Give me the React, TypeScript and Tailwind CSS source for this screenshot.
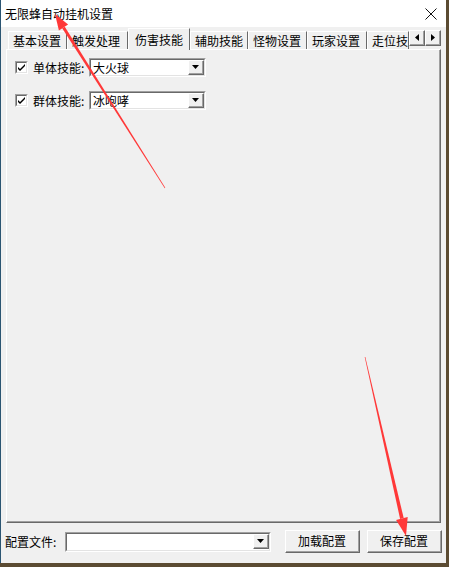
import React from "react";

const font = { fontFamily: '"Noto Sans CJK SC", "Liberation Sans", sans-serif' };

const tabs = [
  { label: "基本设置", w: "w-[59px]" },
  { label: "触发处理", w: "w-[61px]" },
  { label: "伤害技能", w: "w-[62px]", active: true },
  { label: "辅助技能", w: "w-[58px]" },
  { label: "怪物设置", w: "w-[59px]" },
  { label: "玩家设置", w: "w-[60px]" },
  { label: "走位技能", w: "w-[42px]" },
];

function Raised({ className = "", children }: { className?: string; children?: React.ReactNode }) {
  return (
    <div className={`border border-t-white border-l-white border-r-[#696969] border-b-[#696969] ${className}`}>
      <div className="flex h-full w-full items-center justify-center border-r border-b border-[#a0a0a0]">
        {children}
      </div>
    </div>
  );
}

function Sunken({ className = "", children }: { className?: string; children?: React.ReactNode }) {
  return (
    <div className={`border border-t-[#a0a0a0] border-l-[#a0a0a0] border-r-white border-b-white ${className}`}>
      <div className="flex h-full w-full border-t border-l border-t-[#696969] border-l-[#696969] border-r border-b border-r-[#e3e3e3] border-b-[#e3e3e3] bg-white">
        {children}
      </div>
    </div>
  );
}

function Combo({ value, className }: { value: string; className: string }) {
  return (
    <Sunken className={className}>
      <div className="flex-1 pl-[2px] text-[12px] leading-[15px] text-black">{value}</div>
      <Raised className="h-[15px] w-[16px] bg-[#f0f0f0]">
        <svg width="7" height="4" viewBox="0 0 7 4">
          <path d="M0 0h7L3.5 4z" fill="#000" />
        </svg>
      </Raised>
    </Sunken>
  );
}

function Check() {
  return (
    <Sunken className="h-[13px] w-[13px]">
      <svg width="9" height="9" viewBox="0 0 9 9" className="m-auto">
        <path d="M1 4l2 2 5-5v2l-5 5-2-2z" fill="#000" />
      </svg>
    </Sunken>
  );
}

function Row({ label, value }: { label: string; value: string }) {
  return (
    <div className="flex items-center">
      <div className="ml-[8px]">
        <Check />
      </div>
      <span className="ml-[5px] w-[56px] text-[12px] text-black">{label}</span>
      <Combo value={value} className="h-[19px] w-[117px]" />
    </div>
  );
}

export default function App() {
  return (
    <div className="relative h-[567px] w-[449px] overflow-hidden bg-[#5b4b32]" style={font}>
      <div className="flex h-[563px] w-[446px] flex-col border-l border-[#2b5572] bg-[#f0f0f0]">
        <div className="flex h-[27px] items-center justify-between bg-white pl-[4px] pr-[9px]">
          <span className="text-[12px] text-black">无限蜂自动挂机设置</span>
          <svg width="12" height="12" viewBox="0 0 12 12">
            <path d="M0.5 0.5l11 11M11.5 0.5l-11 11" stroke="#111" strokeWidth="1" />
          </svg>
        </div>

        <div className="mx-[5px] mt-[1px] flex h-[21px] items-end pl-[2px]">
          {tabs.map((t) =>
            t.active ? (
              <div
                key={t.label}
                className={`${t.w} relative z-10 -mb-[1px] flex h-[22px] items-center overflow-hidden border-l border-t border-r border-l-white border-t-white border-r-[#696969] bg-[#f0f0f0] pl-[6px] text-[12px] text-black`}
              >
                {t.label}
              </div>
            ) : (
              <div
                key={t.label}
                className={`${t.w} flex h-[18px] items-center overflow-hidden whitespace-nowrap border-l border-t border-r border-l-white border-t-white border-r-[#696969] pl-[4px] text-[12px] text-black`}
              >
                {t.label}
              </div>
            )
          )}
          <div className="mb-[3px] flex">
            <Raised className="h-[16px] w-[16px] bg-[#f0f0f0]">
              <svg width="4" height="7" viewBox="0 0 4 7">
                <path d="M4 0v7L0 3.5z" fill="#000" />
              </svg>
            </Raised>
            <Raised className="h-[16px] w-[16px] bg-[#f0f0f0]">
              <svg width="4" height="7" viewBox="0 0 4 7">
                <path d="M0 0v7l4-3.5z" fill="#000" />
              </svg>
            </Raised>
          </div>
        </div>

        <div className="ml-[5px] h-[474px] w-[435px] border border-t-white border-l-white border-r-[#696969] border-b-[#696969]">
          <div className="flex h-full w-full flex-col gap-[14px] border-r border-b border-[#a0a0a0] pt-[8px]">
            <Row label="单体技能:" value="大火球" />
            <Row label="群体技能:" value="冰咆哮" />
          </div>
        </div>

        <div className="mt-[7px] flex items-center">
          <span className="ml-[4px] w-[60px] text-[12px] text-black">配置文件:</span>
          <Combo value="" className="h-[20px] w-[206px]" />
          <Raised className="ml-[14px] h-[23px] w-[75px] bg-[#f0f0f0]">
            <span className="text-[12px] text-black">加载配置</span>
          </Raised>
          <Raised className="ml-[7px] h-[23px] w-[75px] bg-[#f0f0f0]">
            <span className="text-[12px] text-black">保存配置</span>
          </Raised>
        </div>
      </div>

      <svg className="pointer-events-none absolute inset-0" width="449" height="567" viewBox="0 0 449 567">
        <polygon points="165.25,187.84 164.75,188.16 62.2,28.3 64.8,26.7" fill="#ff3838" />
        <polygon points="55,14 68.1,24.6 58.9,30.4" fill="#ff3838" />
        <polygon points="365.3,356.9 364.7,357.1 400.1,518.9 403.7,518.1" fill="#ff3838" />
        <polygon points="406,536 407.7,517.1 396.1,519.9" fill="#ff3838" />
      </svg>
    </div>
  );
}
